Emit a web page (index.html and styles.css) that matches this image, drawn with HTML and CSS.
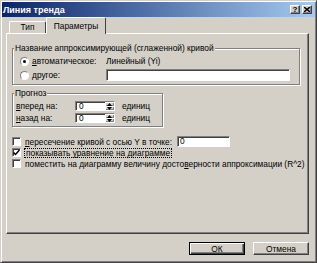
FILE: index.html
```html
<!DOCTYPE html>
<html>
  <head>
    <meta charset="utf-8">
    <title>Линия тренда</title>
    <link rel="stylesheet" href="styles.css">
  </head>
  <body>
    <div class="dialog">
      <div class="titlebar">
        <span class="titlebar__text">Линия тренда</span>
        <span class="titlebar__buttons">
          <span class="titlebar__btn titlebar__btn--help">?</span>
          <span class="titlebar__btn">
            <svg width="6" height="5" viewBox="0 0 6 5"><path d="M0 0L6 5M6 0L0 5" stroke="#000" stroke-width="1.4"/></svg>
          </span>
        </span>
      </div>

      <div class="tabs">
        <div class="tabs__head">
          <span class="tab">Тип</span>
          <span class="tab tab--active">Параметры</span>
        </div>
        <div class="tabs__panel">
          <fieldset class="group group--name">
            <legend>Название аппроксимирующей (сглаженной) кривой</legend>
            <div class="name-grid">
              <label class="choice"><span class="radio radio--on"></span><span><u>а</u>втоматическое:</span></label>
              <span class="name-grid__auto">Линейный (Yi)</span>
              <label class="choice"><span class="radio"></span><span><u>д</u>ругое:</span></label>
              <span class="field field--wide"></span>
            </div>
          </fieldset>

          <fieldset class="group group--forecast">
            <legend>Прогноз</legend>
            <div class="forecast-grid">
              <span><u>в</u>перед на:</span>
              <span class="spin">
                <span class="spin__value">0</span>
                <span class="spin__buttons">
                  <span class="spin__btn"><svg width="5" height="3" viewBox="0 0 5 3"><path d="M2.5 0L5 3H0z" fill="#000"/></svg></span>
                  <span class="spin__btn"><svg width="5" height="3" viewBox="0 0 5 3"><path d="M0 0H5L2.5 3z" fill="#000"/></svg></span>
                </span>
              </span>
              <span>единиц</span>
              <span><u>н</u>азад на:</span>
              <span class="spin">
                <span class="spin__value">0</span>
                <span class="spin__buttons">
                  <span class="spin__btn"><svg width="5" height="3" viewBox="0 0 5 3"><path d="M2.5 0L5 3H0z" fill="#000"/></svg></span>
                  <span class="spin__btn"><svg width="5" height="3" viewBox="0 0 5 3"><path d="M0 0H5L2.5 3z" fill="#000"/></svg></span>
                </span>
              </span>
              <span>единиц</span>
            </div>
          </fieldset>

          <div class="checks">
            <label class="check-row">
              <span class="checkbox"></span>
              <span><u>п</u>ересечение кривой с осью Y в точке:</span>
              <span class="field field--point">0</span>
            </label>
            <label class="check-row">
              <span class="checkbox checkbox--on">
                <svg width="7" height="7" viewBox="0 0 7 7"><path d="M0.5 3.5L2.5 5.5L6.5 1" fill="none" stroke="#000" stroke-width="1.5"/></svg>
              </span>
              <span class="check-row__focus">показывать <u>у</u>равнение на диаграмме</span>
            </label>
            <label class="check-row">
              <span class="checkbox"></span>
              <span>поместить на диаграмму величину досто<u>в</u>ерности аппроксимации (R^2)</span>
            </label>
          </div>
        </div>

        <div class="actions">
          <button type="button" class="btn btn--default">ОК</button>
          <button type="button" class="btn">Отмена</button>
        </div>
      </div>
    </div>
  </body>
</html>
```

FILE: styles.css
```css
body {
    margin: 0;
    font-family: "Liberation Sans", Arial, sans-serif;
    font-size: 8.35px;
    color: #000;
    background: #d4d0c8;
}

.dialog {
    width: 317px;
    height: 263px;
    box-sizing: border-box;
    padding: 1px;
    border: 1px solid;
    border-color: #d4d0c8 #404040 #404040 #d4d0c8;
    box-shadow: inset 1px 1px 0 #fff, inset -1px -1px 0 #808080;
    background: #d4d0c8;
}

/* title bar */
.titlebar {
    display: flex;
    align-items: center;
    justify-content: space-between;
    height: 15px;
    padding: 0 3px 0 1px;
    background: linear-gradient(to right, #0a246a, #a6caf0);
    color: #fff;
    font-size: 9px;
    font-weight: bold;
}
.titlebar__buttons {
    display: flex;
    gap: 2px;
}
.titlebar__btn {
    display: flex;
    align-items: center;
    justify-content: center;
    width: 10px;
    height: 9px;
    box-sizing: border-box;
    border: 1px solid;
    border-color: #fff #404040 #404040 #fff;
    box-shadow: inset -1px -1px 0 #808080;
    background: #d4d0c8;
    color: #000;
    font-size: 8px;
    line-height: 7px;
}

/* tabs */
.tabs {
    padding: 0 6px 0 4px;
}
.tabs__head {
    display: flex;
    align-items: flex-end;
    height: 16px;
    padding-left: 3px;
}
.tab {
    width: 37px;
    height: 12px;
    box-sizing: border-box;
    border: 1px solid;
    border-color: #fff #404040 transparent #fff;
    border-bottom: none;
    border-radius: 2px 2px 0 0;
    text-align: center;
    line-height: 11px;
}
.tab--active {
    position: relative;
    width: 60px;
    height: 17px;
    margin-bottom: -1px;
    background: #d4d0c8;
    line-height: 16px;
}
.tabs__panel {
    height: 201px;
    box-sizing: border-box;
    padding: 9px 5px 0 5px;
    border: 1px solid;
    border-color: #fff #404040 #404040 #fff;
    box-shadow: inset -1px -1px 0 #808080;
}

/* group boxes */
.group {
    margin: 0;
    box-sizing: border-box;
    border: 1px solid #808080;
    box-shadow: inset 1px 1px 0 #fff, 1px 1px 0 #fff;
}
.group legend {
    padding: 0 1px;
    margin-left: -6px;
    line-height: 10px;
    background: #d4d0c8;
}
.group--name {
    width: 288px;
    padding: 2px 8px 3px 7px;
}
.group--forecast {
    width: 151px;
    margin-top: 3px;
    padding: 3px 4px 3px 3px;
}
.group--forecast legend {
    margin-left: -2px;
}

.name-grid {
    display: grid;
    grid-template-columns: 86px 1fr;
    grid-auto-rows: 12px;
    row-gap: 2px;
    align-items: center;
}
.choice {
    display: flex;
    align-items: center;
    gap: 3px;
}
.radio {
    width: 9px;
    height: 9px;
    box-sizing: border-box;
    border-radius: 50%;
    border: 1px solid;
    border-color: #808080 #fff #fff #808080;
    background: #fff;
    display: flex;
    align-items: center;
    justify-content: center;
}
.radio--on::after {
    content: "";
    width: 3px;
    height: 3px;
    border-radius: 50%;
    background: #000;
}

.field {
    display: block;
    box-sizing: border-box;
    height: 12px;
    padding-left: 2px;
    border: 1px solid;
    border-color: #808080 #fff #fff #808080;
    box-shadow: inset 1px 1px 0 #404040;
    background: #fff;
    line-height: 10px;
}
.field--wide {
    width: 184px;
}
.field--point {
    width: 53px;
    height: 11px;
    margin-left: 5px;
    line-height: 9px;
}

.forecast-grid {
    display: grid;
    grid-template-columns: 52px 40px auto;
    grid-auto-rows: 10px;
    column-gap: 7px;
    row-gap: 2px;
    align-items: center;
}
.spin {
    display: flex;
    height: 10px;
    box-sizing: border-box;
    border: 1px solid;
    border-color: #808080 #fff #fff #808080;
    box-shadow: inset 1px 1px 0 #404040;
    background: #fff;
}
.spin__value {
    flex: 1;
    padding-left: 3px;
    line-height: 8px;
}
.spin__buttons {
    display: flex;
    flex-direction: column;
    width: 9px;
}
.spin__btn {
    flex: 1;
    display: flex;
    align-items: center;
    justify-content: center;
    background: #d4d0c8;
    box-shadow: inset 1px 1px 0 #fff, inset -1px -1px 0 #808080;
}

/* checkboxes */
.checks {
    margin-top: 9px;
}
.check-row {
    display: flex;
    align-items: center;
    height: 11px;
    white-space: nowrap;
}
.checkbox {
    display: flex;
    align-items: center;
    justify-content: center;
    flex: none;
    width: 9px;
    height: 9px;
    margin-right: 4px;
    box-sizing: border-box;
    border: 1px solid;
    border-color: #808080 #fff #fff #808080;
    box-shadow: inset 1px 1px 0 #404040;
    background: #fff;
}
.check-row__focus {
    margin-left: -1px;
    padding: 0 1px;
    border: 1px dotted #000;
    line-height: 8px;
}

/* buttons */
.actions {
    display: flex;
    justify-content: flex-end;
    gap: 8px;
    margin-top: 8px;
}
.btn {
    width: 56px;
    height: 13px;
    padding: 0;
    box-sizing: border-box;
    border: 1px solid;
    border-color: #fff #404040 #404040 #fff;
    box-shadow: inset -1px -1px 0 #808080;
    background: #d4d0c8;
    font-family: inherit;
    font-size: 8.35px;
    color: #000;
}
.btn--default {
    border-color: #000;
    box-shadow: inset 1px 1px 0 #fff, inset -1px -1px 0 #404040, inset -2px -2px 0 #808080;
}
```
